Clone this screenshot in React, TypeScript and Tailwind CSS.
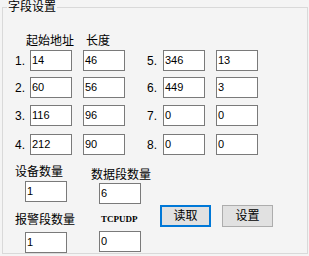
import React from "react";

function Field({ v, className = "" }: { v: string; className?: string }) {
  return (
    <div
      className={
        "h-[21px] w-[42px] shrink-0 border border-[#7a7a7a] bg-white pl-[1px] pt-[2px] text-[11px] leading-[14px] text-black " +
        className
      }
    >
      {v}
    </div>
  );
}

function Row({
  n1,
  n2,
  a,
  b,
  c,
  d,
  cls,
}: {
  n1: string;
  n2: string;
  a: string;
  b: string;
  c: string;
  d: string;
  cls: string;
}) {
  return (
    <div className={"flex items-center pl-[12px] " + cls}>
      <span className="w-[15px] text-[12px] leading-[14px]">{n1}.</span>
      <Field v={a} />
      <Field v={b} className="ml-[11px]" />
      <span className="ml-[22px] w-[16px] text-[12px] leading-[14px]">{n2}.</span>
      <Field v={c} />
      <Field v={d} className="ml-[11px]" />
    </div>
  );
}

export default function App() {
  return (
    <div className="h-[256px] w-[309px] overflow-hidden bg-[#f4f4f4] pt-[7px] pl-[2px] font-['Liberation_Sans','Noto_Sans_CJK_SC',sans-serif] text-black">
      <div className="relative h-[247px] w-[306px] border border-[#d9d9d9]">
        <div className="absolute left-[4px] top-[-8px] bg-[#f4f4f4] px-[1px] text-[12px] leading-[14px]">
          字段设置
        </div>

        <div className="pt-[26px]">
          <div className="flex text-[12px] leading-[14px]">
            <span className="ml-[23px]">起始地址</span>
            <span className="ml-[12px]">长度</span>
          </div>

          <Row cls="mt-[2px]" n1="1" n2="5" a="14" b="46" c="346" d="13" />
          <Row cls="mt-[6px]" n1="2" n2="6" a="60" b="56" c="449" d="3" />
          <Row cls="mt-[7px]" n1="3" n2="7" a="116" b="96" c="0" d="0" />
          <Row cls="mt-[8px]" n1="4" n2="8" a="212" b="90" c="0" d="0" />

          <div className="flex items-start pl-[12px]">
            <div className="flex w-[76px] flex-col">
              <span className="mt-[10px] text-[12px] leading-[14px]">设备数量</span>
              <Field v="1" className="mt-[2px] ml-[10px]" />
              <span className="mt-[11px] text-[12px] leading-[14px]">报警段数量</span>
              <Field v="1" className="mt-[5px] ml-[10px]" />
            </div>
            <div className="flex w-[69px] flex-col">
              <span className="mt-[13px] text-[12px] leading-[14px]">数据段数量</span>
              <Field v="6" className="mt-[1px] ml-[8px]" />
              <span className="mt-[9px] ml-[10px] font-['Liberation_Serif',serif] text-[9px] font-bold leading-[12px]">
                TCPUDP
              </span>
              <Field v="0" className="mt-[6px] ml-[8px]" />
            </div>
            <div className="mt-[50px] flex">
              <button className="flex h-[22px] w-[51px] items-center justify-center border-2 border-[#0078d7] bg-[#e1e1e1] text-[12px] leading-[14px]">
                读取
              </button>
              <button className="ml-[11px] flex h-[22px] w-[51px] items-center justify-center border border-[#adadad] bg-[#e1e1e1] text-[12px] leading-[14px]">
                设置
              </button>
            </div>
          </div>
        </div>
      </div>
    </div>
  );
}
